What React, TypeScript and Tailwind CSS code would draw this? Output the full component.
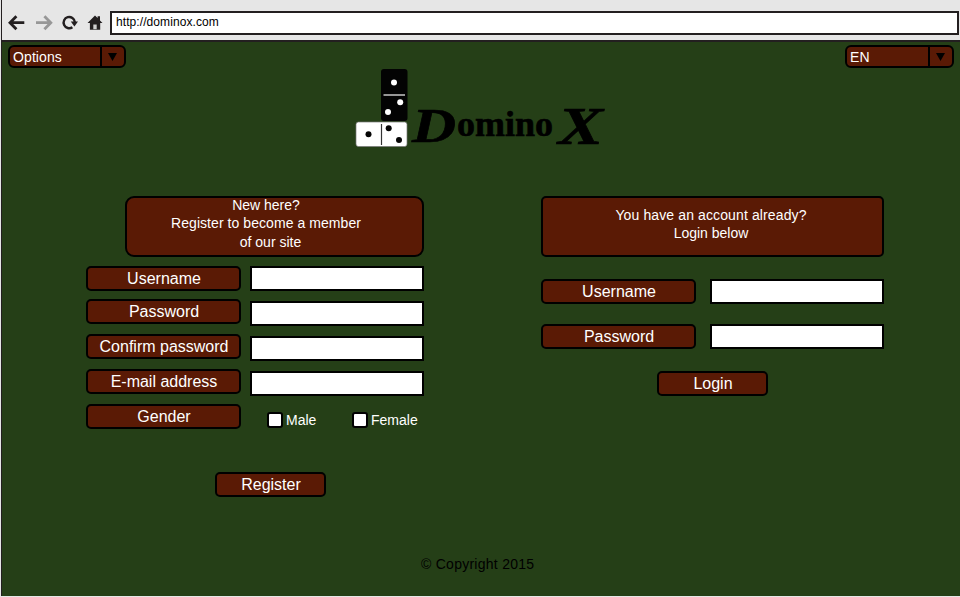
import React from "react";

function Label({ children, className = "" }: { children: React.ReactNode; className?: string }) {
  return (
    <div
      className={`flex h-[25px] shrink-0 items-center justify-center rounded-[5px] border-2 border-black bg-[#5a1a05] pl-[1px] text-[16px] leading-[20px] whitespace-nowrap text-white ${className}`}
    >
      {children}
    </div>
  );
}

function Field({ label }: { label: string }) {
  return <input aria-label={label} className="block h-[25px] w-[174px] shrink-0 border-2 border-black bg-white outline-none" />;
}

function Select({ text, className }: { text: string; className: string }) {
  return (
    <div className={`flex h-[23px] rounded-[6px] border-2 border-black bg-[#5a1a05] text-[14px] text-white ${className}`}>
      <span className="flex-1 pl-[3px] leading-[20px] tracking-[0.1px]">{text}</span>
      <span className="flex w-[24px] items-center justify-center border-l-2 border-black pr-[1px]">
        <svg width="9" height="8" viewBox="0 0 9 8">
          <path d="M0 0h9L4.5 8z" fill="#000" />
        </svg>
      </span>
    </div>
  );
}

function BrowserBar() {
  return (
    <header className="flex h-[42px] border-b-2 border-[#231f20] bg-[#e6e6e6]">
      <svg width="108" height="40" viewBox="2 0 108 40" className="shrink-0" fill="none">
        <path d="M10.5 22.7H24.3M16.4 16.2L10 22.7l6.4 6.5" stroke="#231f20" strokeWidth="2.8" />
        <path d="M36 22.7H50.5M44.4 16.2L50.8 22.7l-6.4 6.5" stroke="#979797" strokeWidth="2.8" />
        <path d="M72.4 27.2A5.6 5.6 0 1 1 74.8 22" stroke="#231f20" strokeWidth="2.4" />
        <path d="M70.8 21.6H78L74.4 26.4z" fill="#231f20" />
        <path d="M87.5 23L95 15.4l2.6 2.6v-1.8h2.4v4.2l2.5 2.6h-2.3v6.7H89.9V23z" fill="#231f20" />
        <path d="M93.3 24.5h3.4v4.7h-3.4z" fill="#cfcfcf" />
      </svg>
      <div className="mt-[11px] mr-[1px] h-[24px] flex-1 border-2 border-[#231f20] bg-white pl-[4px] text-[12px] leading-[18px] tracking-[0.08px] text-black">
        http://dominox.com
      </div>
    </header>
  );
}

function Logo() {
  return (
    <svg width="266" height="98" viewBox="355 67 266 98" className="ml-[353px] block">
      <rect x="381" y="69" width="26.5" height="52" rx="3" fill="#030303" />
      <path d="M383.5 95H405" stroke="#bbb" strokeWidth="1.6" />
      <g fill="#fff">
        <circle cx="394" cy="82.5" r="3" />
        <circle cx="400.2" cy="102.2" r="3" />
        <circle cx="388" cy="112" r="3" />
      </g>
      <rect x="356" y="122" width="51" height="24.5" rx="2.5" fill="#fff" stroke="#777" strokeWidth=".7" />
      <path d="M381.5 124V145" stroke="#333" strokeWidth="1.2" />
      <g fill="#050505">
        <circle cx="368.5" cy="134.3" r="3" />
        <circle cx="388.7" cy="128.2" r="3" />
        <circle cx="399" cy="140" r="3" />
      </g>
      <g fill="#000" stroke="#000" strokeWidth=".6" fontFamily="Liberation Serif, serif" fontWeight="700">
        <text transform="translate(412 142) scale(1.27 1)" fontSize="48" fontStyle="italic">D</text>
        <text x="457" y="136" fontSize="36">omino</text>
        <text transform="translate(558 143.5) scale(1.3 1)" fontSize="52" fontStyle="italic">X</text>
      </g>
    </svg>
  );
}

function CheckOption({ label, className }: { label: string; className: string }) {
  return (
    <label className={`flex items-center text-[14px] leading-[16px] text-white ${className}`}>
      <span className="mr-[3px] h-[16px] w-[16px] rounded-[3px] border-2 border-black bg-white" />
      {label}
    </label>
  );
}

function RegisterForm() {
  return (
    <section className="w-[338px]">
      <div className="ml-[39px] h-[61px] w-[299px] rounded-[9px] border-2 border-black bg-[#5a1a05] text-center text-[14px] leading-[18px] text-white">
        <p className="-mt-[2px] pr-[17px]">New here?</p>
        <p className="pr-[17px] tracking-[0.06px]">Register to become a member</p>
        <p className="mt-[1px] pr-[8px]">of our site</p>
      </div>
      <div className="mt-[9px] flex justify-between">
        <div>
          <Label className="w-[155px]">Username</Label>
          <Label className="mt-[8px] w-[155px]">Password</Label>
          <Label className="mt-[10px] w-[155px]">Confirm password</Label>
          <Label className="mt-[10px] w-[155px]">E-mail address</Label>
          <Label className="mt-[10px] w-[155px]">Gender</Label>
        </div>
        <div className="flex w-[174px] flex-col gap-[10px]">
          <Field label="Username" />
          <Field label="Password" />
          <Field label="Confirm password" />
          <Field label="E-mail address" />
          <div className="mt-[6px] flex">
            <CheckOption label="Male" className="ml-[17px] w-[85px]" />
            <CheckOption label="Female" className="" />
          </div>
        </div>
      </div>
      <Label className="mt-[43px] ml-[129px] w-[111px]">Register</Label>
    </section>
  );
}

function LoginForm() {
  return (
    <section className="ml-[117px] w-[343px]">
      <div className="h-[61px] rounded-[5px] border-2 border-black bg-[#5a1a05] pt-[8px] pr-[3px] text-center text-[14px] leading-[18px] text-white">
        <p className="tracking-[0.12px]">You have an account already?</p>
        <p>Login below</p>
      </div>
      <div className="mt-[22px] flex justify-between">
        <Label className="w-[155px]">Username</Label>
        <Field label="Login username" />
      </div>
      <div className="mt-[20px] flex justify-between">
        <Label className="w-[155px]">Password</Label>
        <Field label="Login password" />
      </div>
      <Label className="mt-[22px] ml-[116px] w-[111px]">Login</Label>
    </section>
  );
}

export default function App() {
  return (
    <div className="h-[597px] w-[960px] overflow-hidden bg-[#e6e6e6] pl-[1px] font-['Liberation_Sans',Arial,sans-serif]">
      <div className="h-[596px] border-l border-[#231f20] bg-[#253f17]">
        <BrowserBar />
        <div className="flex h-[25px] justify-between pt-[3px] pr-[6px] pl-[6px]">
          <Select text="Options" className="w-[118px]" />
          <Select text="EN" className="w-[109px]" />
        </div>
        <Logo />
        <main className="mt-[31px] ml-[84px] flex">
          <RegisterForm />
          <LoginForm />
        </main>
        <footer className="mt-[59px] ml-[419px] text-[14px] leading-[16px] tracking-[0.26px] text-black">© Copyright 2015</footer>
      </div>
    </div>
  );
}
